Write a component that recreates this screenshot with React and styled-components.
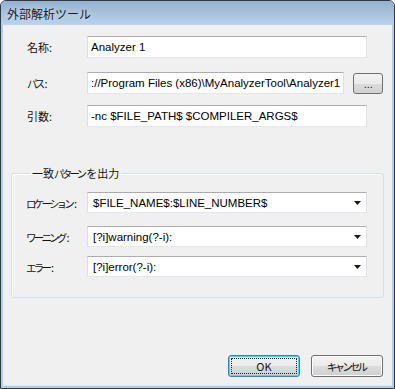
import React from "react"
import styled, {createGlobalStyle} from "styled-components"

const GlobalStyle = createGlobalStyle`
  html,body{margin:0;padding:0;background:#fff;}
  body{width:395px;height:389px;overflow:hidden;}
`

const jp = `"Noto Sans CJK JP", sans-serif`
const latin = `"Liberation Sans", Arial, "Noto Sans CJK JP", sans-serif`

function ExternalToolDialog(){
    return(
        <Window>
          <TitleBar>外部解析ツール</TitleBar>
          <Client>
              <Field top={11}>
                  <Label>名称:</Label>
                  <TextBox>Analyzer 1</TextBox>
              </Field>
              <Field top={14}>
                  <Label><Kana>パス</Kana>:</Label>
                  <PathRow>
                      <TextBox>://Program Files (x86)\MyAnalyzerTool\Analyzer1</TextBox>
                      <SmallButton>...</SmallButton>
                  </PathRow>
              </Field>
              <Field top={11}>
                  <Label>引数:</Label>
                  <TextBox>-nc $FILE_PATH$ $COMPILER_ARGS$</TextBox>
              </Field>

              <Group>
                  <Legend>一致<Kana>パターン</Kana>を出力</Legend>
                  <ComboRow top={11}>
                      <Label><Kana>ロケーション</Kana>:</Label>
                      <Combo>$FILE_NAME$:$LINE_NUMBER$<Arrow/></Combo>
                  </ComboRow>
                  <ComboRow top={13}>
                      <Label><Kana>ワーニング</Kana>:</Label>
                      <Combo>[?i]warning(?-i):<Arrow/></Combo>
                  </ComboRow>
                  <ComboRow top={9}>
                      <Label><Kana>エラー</Kana>:</Label>
                      <Combo>[?i]error(?-i):<Arrow/></Combo>
                  </ComboRow>
              </Group>

              <ButtonBar>
                  <Button primary>OK</Button>
                  <Button><Kana>キャンセル</Kana></Button>
              </ButtonBar>
          </Client>
        </Window>
    )
}

const Arrow = () => (
    <ArrowSvg width="7" height="4" viewBox="0 0 7 4">
        <path d="M0 0H7L3.5 4Z" fill="#1a1a1a"/>
    </ArrowSvg>
)

export default function App(){
    return(
        <>
          <GlobalStyle/>
          <ExternalToolDialog/>
        </>
    )
}

const Window = styled.div`
    width:395px;
    height:389px;
    box-sizing:border-box;
    border:1px solid #2e3944;
    border-radius:6px 6px 0 0;
    background:#b3cde8;
    display:flex;
    flex-direction:column;
    overflow:hidden;
`

const TitleBar = styled.div`
    height:24px;
    flex:none;
    background:linear-gradient(#95b1cf, #bbd2ea);
    display:flex;
    align-items:center;
    padding-left:6px;
    font:12px ${jp};
    color:#1b1b1b;
    text-shadow:0 0 6px rgba(255,255,255,0.7);
`

const Client = styled.div`
    flex:1;
    margin:0 2px 2px 2px;
    background:#f0f0f0;
    display:flex;
    flex-direction:column;
    border-bottom:1px solid #d7e6f3;
`

const Field = styled.div`
    display:grid;
    grid-template-columns:60px 1fr;
    align-items:center;
    margin-top:${p=>p.top}px;
    padding:0 25px 0 24px;
`

const Label = styled.span`
    font:11px ${jp};
    color:#111;
    white-space:nowrap;
`

// narrow katakana like the dialog's UI font
const Kana = styled.span`
    font-size:10.5px;
    letter-spacing:-2.8px;
    margin-right:2px;
`

const TextBox = styled.div`
    height:22px;
    box-sizing:border-box;
    background:#fff;
    border:1px solid #e2e8ee;
    border-top-color:#abadb3;
    border-left-color:#dbdfe6;
    border-right-color:#dbdfe6;
    padding:0 3px;
    display:flex;
    align-items:center;
    font:11.5px ${latin};
    color:#000;
    white-space:nowrap;
    overflow:hidden;
    flex:1;
    min-width:0;
`

const PathRow = styled.div`
    display:flex;
    align-items:center;
    gap:9px;
`

const SmallButton = styled.div`
    width:30px;
    height:21px;
    box-sizing:border-box;
    border:1px solid #707070;
    border-radius:3px;
    background:linear-gradient(#f2f2f2 0%, #ebebeb 50%, #dddddd 51%, #cfcfcf 100%);
    display:flex;
    align-items:flex-end;
    justify-content:center;
    padding-bottom:5px;
    font:11px ${latin};
    line-height:8px;
    color:#222;
    flex:none;
`

const Group = styled.fieldset`
    margin:39px 8px 0 8px;
    padding:0 16px 20px 14px;
    border:1px solid #d5dfe5;
    border-radius:3px;
    box-shadow:inset 1px 1px 0 #fff;
    min-width:0;
`

const Legend = styled.legend`
    font:11px ${jp};
    line-height:14px;
    color:#111;
    padding:0 2px;
    margin-left:4px;
`

const ComboRow = styled.div`
    display:grid;
    grid-template-columns:61px 1fr;
    align-items:center;
    margin-top:${p=>p.top}px;
`

const Combo = styled.div`
    height:21px;
    box-sizing:border-box;
    background:#fff;
    border:1px solid #e2e8ee;
    border-top-color:#abadb3;
    border-left-color:#dbdfe6;
    border-right-color:#dbdfe6;
    padding:0 4px 0 5px;
    display:flex;
    align-items:center;
    justify-content:space-between;
    font:11.5px ${latin};
    color:#000;
    white-space:nowrap;
`

const ArrowSvg = styled.svg`
    flex:none;
    margin-right:1px;
`

const ButtonBar = styled.div`
    margin-top:auto;
    display:flex;
    justify-content:flex-end;
    gap:11px;
    padding:0 9px 8px 0;
`

const Button = styled.div`
    width:72px;
    height:22px;
    box-sizing:border-box;
    border:1px solid ${p=>p.primary ? "#3c7fb1" : "#707070"};
    border-radius:3px;
    background:linear-gradient(#f2f2f2 0%, #ebebeb 50%, #dddddd 51%, #cfcfcf 100%);
    box-shadow:${p=>p.primary ? "inset 0 0 0 1px #48d6f9" : "inset 0 0 0 1px #fcfcfc"};
    display:flex;
    align-items:center;
    justify-content:center;
    font:11px ${jp};
    color:#111;
    position:relative;
    &::after{
        content:"";
        display:${p=>p.primary ? "block" : "none"};
        position:absolute;
        inset:2px;
        border:1px dotted #222;
        border-radius:1px;
    }
`
